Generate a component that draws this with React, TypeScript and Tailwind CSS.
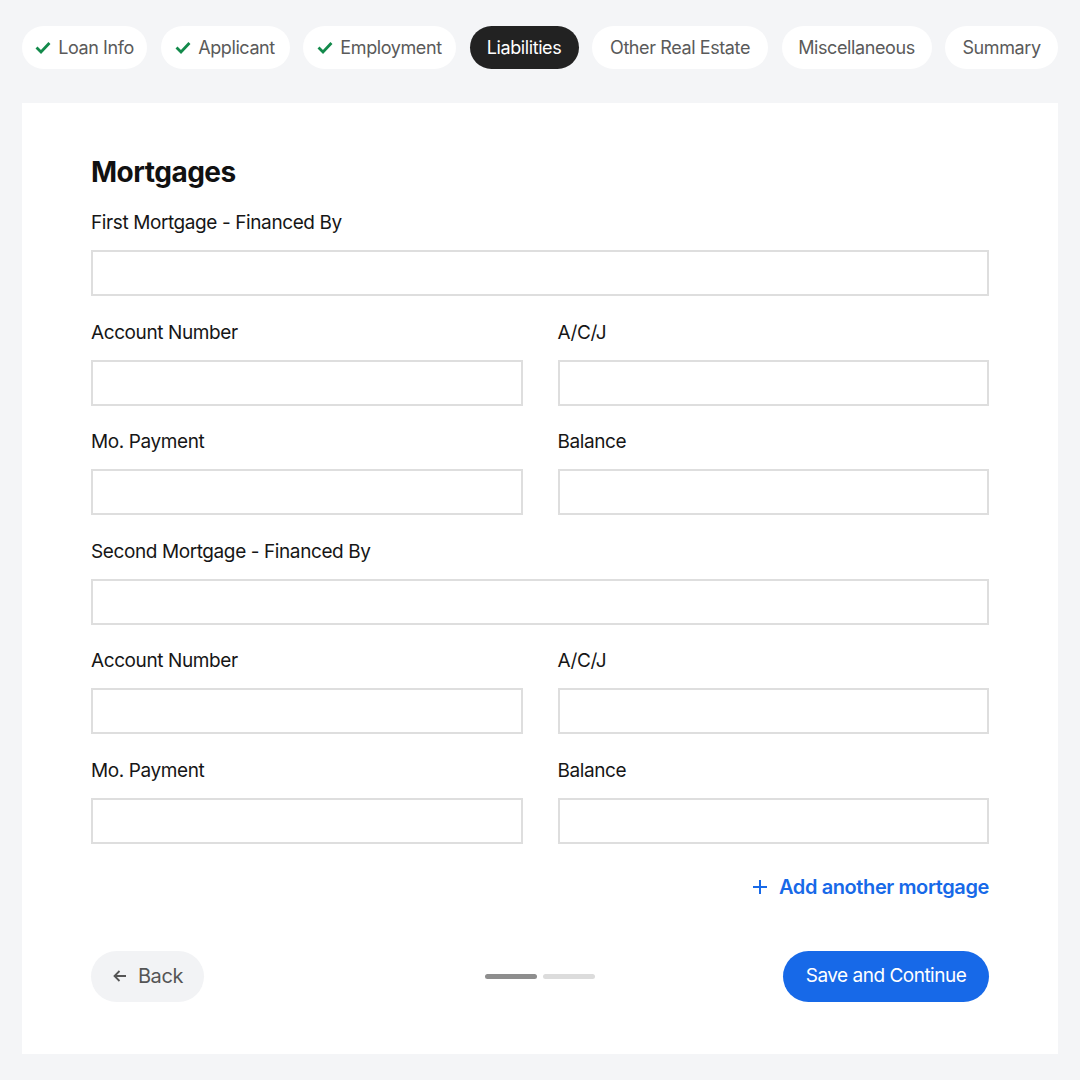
import React from "react";

const steps = [
  { label: "Loan Info", done: true, w: "w-[125px]" },
  { label: "Applicant", done: true, w: "w-[129px]" },
  { label: "Employment", done: true, w: "w-[153px]" },
  { label: "Liabilities", active: true, w: "w-[109px]" },
  { label: "Other Real Estate", w: "w-[176px]" },
  { label: "Miscellaneous", w: "w-[150px]" },
  { label: "Summary", w: "w-[113px]" },
];

function Check() {
  return (
    <svg width="16" height="16" viewBox="0 0 16 16" fill="none" className="shrink-0">
      <path d="M2.5 8.5l3.5 3.5 7.5-8" stroke="#138a4b" strokeWidth="2.8" strokeLinecap="square" />
    </svg>
  );
}

function Field({ label }: { label: string }) {
  return (
    <div className="flex flex-col">
      <label className="mb-[15px] h-6 text-[19px] leading-6 tracking-[-0.4px] text-[#161616]">{label}</label>
      <input className="h-[46px] w-full border-2 border-[#dedede] bg-white outline-none" />
    </div>
  );
}

function MortgageBlock({ title }: { title: string }) {
  return (
    <>
      <Field label={title} />
      <div className="grid grid-cols-2 gap-x-[35px]">
        <Field label="Account Number" />
        <Field label="A/C/J" />
      </div>
      <div className="grid grid-cols-2 gap-x-[35px]">
        <Field label="Mo. Payment" />
        <Field label="Balance" />
      </div>
    </>
  );
}

export default function App() {
  return (
    <div className="min-h-[1080px] bg-[#f4f5f7] px-[22px] pt-[26px] pb-[27px]" style={{ fontFamily: "Inter, 'Liberation Sans', sans-serif" }}>
      <nav className="flex justify-between">
        {steps.map((s) =>
          s.active ? (
            <div key={s.label} className={`flex h-[43px] ${s.w} items-center justify-center whitespace-nowrap rounded-full bg-[#222222] text-[18px] tracking-[-0.4px] text-white`}>
              {s.label}
            </div>
          ) : (
            <div
              key={s.label}
              className={`flex h-[43px] ${s.w} items-center justify-center gap-[7px] whitespace-nowrap rounded-full bg-white text-[18px] tracking-[-0.4px] text-[#5a5a5a]`}
            >
              {s.done && <Check />}
              {s.label}
            </div>
          )
        )}
      </nav>

      <main className="mt-[34px] bg-white px-[69px] pt-[52px] pb-[52px]">
        <h1 className="h-[34px] text-[28px] font-bold leading-[34px] tracking-[-0.5px] text-[#111]">Mortgages</h1>
        <div className="mt-[22px] flex flex-col gap-[24.5px]">
          <MortgageBlock title="First Mortgage - Financed By" />
          <MortgageBlock title="Second Mortgage - Financed By" />
        </div>
        <div className="mt-[31px] flex justify-end">
          <button className="flex items-center gap-[12px] text-[20px] font-semibold leading-6 tracking-[-0.4px] text-[#1769e8]">
            <svg width="14" height="14" viewBox="0 0 14 14" fill="none">
              <path d="M7 0v14M0 7h14" stroke="#1769e8" strokeWidth="2" />
            </svg>
            Add another mortgage
          </button>
        </div>
        <div className="mt-[52px] flex items-center">
          <button className="flex h-[51px] w-[113px] items-center justify-center gap-[10px] rounded-full bg-[#f2f3f5] text-[20px] tracking-[-0.4px] text-[#555]">
            <svg width="16" height="16" viewBox="0 0 16 16" fill="none">
              <path d="M14 8H2.5M7.5 3l-5 5 5 5" stroke="#555" strokeWidth="1.8" />
            </svg>
            Back
          </button>
          <div className="ml-[281px] flex gap-[6px]">
            <span className="h-[5px] w-[52px] rounded-full bg-[#8e8e8e]" />
            <span className="h-[5px] w-[52px] rounded-full bg-[#dcdcdc]" />
          </div>
          <button className="ml-auto flex h-[51px] w-[206px] items-center justify-center rounded-full bg-[#1769e8] text-[19px] tracking-[-0.5px] text-white">
            Save and Continue
          </button>
        </div>
      </main>
    </div>
  );
}
